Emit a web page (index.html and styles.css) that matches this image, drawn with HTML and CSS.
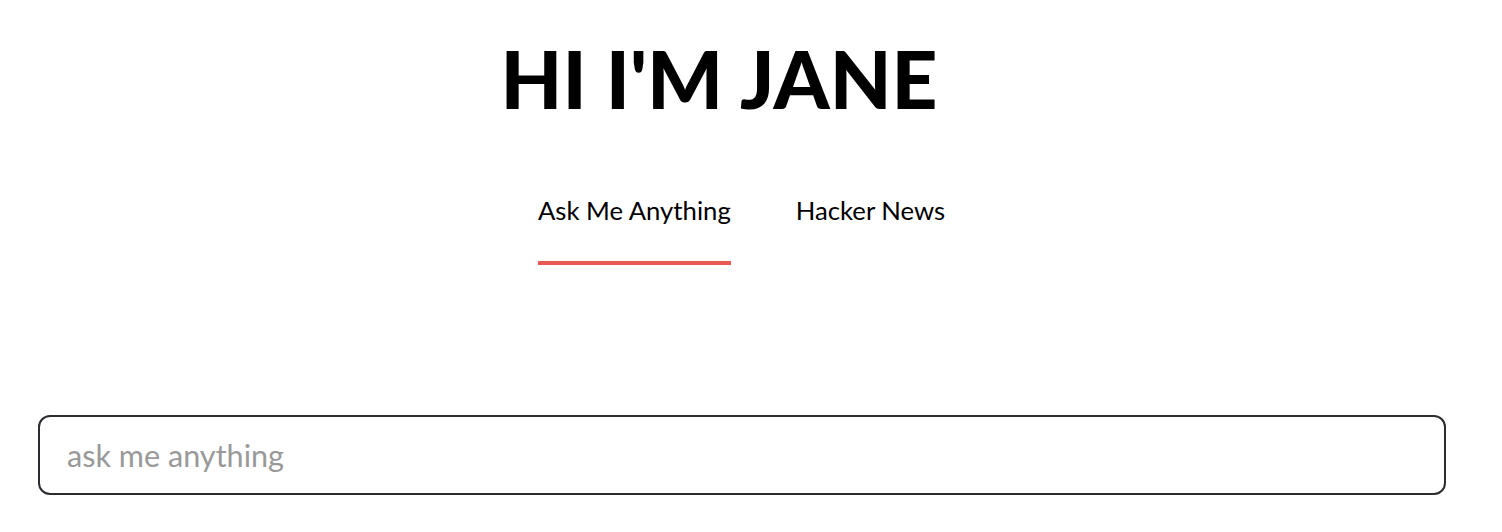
FILE: index.html
```html
<!DOCTYPE html>
<html>
<head>
<meta charset="utf-8">
<link rel="stylesheet" href="styles.css">
</head>
<body>
<header class="hero">
  <h1 class="title">HI I'M JANE</h1>
</header>
<nav class="tabs">
  <a class="tab active" href="#">Ask Me Anything</a>
  <a class="tab" href="#">Hacker News</a>
</nav>
<main class="ask">
  <input class="ask-input" type="text" placeholder="ask me anything">
</main>
</body>
</html>
```
FILE: styles.css
```css
* { box-sizing: border-box; }
body {
  margin: 0;
  font-family: Lato, "Noto Sans", sans-serif;
  color: #000;
  background: #fff;
}
.hero {
  display: flex;
  justify-content: center;
  padding-top: 38px;
  padding-right: 64px;
}
.title {
  margin: 0;
  font-size: 80px;
  font-weight: 900;
  line-height: 80px;
  letter-spacing: 0;
}
.tabs {
  display: flex;
  justify-content: center;
  gap: 65px;
  margin-top: 74px;
  padding-right: 19px;
}
.tab {
  color: #000;
  text-decoration: none;
  font-size: 25.7px;
  line-height: 36px;
  padding-bottom: 33px;
  border-bottom: 4px solid transparent;
}
.tab.active {
  border-bottom-color: #eb5a52;
}
.ask {
  padding: 150px 56px 0 38px;
}
.ask-input {
  display: block;
  width: 100%;
  height: 80px;
  border: 2px solid #2c2c30;
  border-radius: 12px;
  padding: 0 27px;
  font-family: inherit;
  font-size: 30.6px;
  color: #000;
  outline: none;
}
.ask-input::placeholder {
  color: #999;
}
```
